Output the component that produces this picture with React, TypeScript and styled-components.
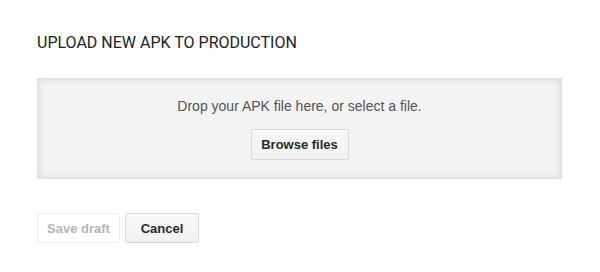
import React from 'react';
import styled, { createGlobalStyle } from 'styled-components';

const GlobalStyle = createGlobalStyle`
  html, body {
    margin: 0;
    padding: 0;
    background: #fff;
  }
  body {
    font-family: 'Liberation Sans', Arial, sans-serif;
  }
`;

const Page = styled.div`
  width: 600px;
  height: 272px;
  box-sizing: border-box;
  padding: 34px 38px 0 37px;
`;

const Heading = styled.h2`
  margin: 0;
  font-family: Roboto, 'Liberation Sans', sans-serif;
  font-weight: 400;
  font-size: 16px;
  line-height: 18px;
  color: #222;
`;

const DropZone = styled.div`
  margin-top: 26px;
  height: 101px;
  box-sizing: border-box;
  background: #f3f3f3;
  border: 1px solid #e0e0e0;
  box-shadow: inset 0 0 7px rgba(0, 0, 0, 0.13);
  display: flex;
  flex-direction: column;
  align-items: center;
  padding-top: 19px;
`;

const DropText = styled.p`
  margin: 0;
  font-size: 14px;
  line-height: 16px;
  color: #555;
`;

const Button = styled.button<{ $disabled?: boolean; $width: number }>`
  box-sizing: border-box;
  width: ${(p) => p.$width}px;
  height: 30px;
  padding: 0;
  white-space: nowrap;
  font-family: 'Liberation Sans', Arial, sans-serif;
  font-size: 13px;
  font-weight: 700;
  border-radius: 2px;
  border: 1px solid ${(p) => (p.$disabled ? '#eeeeee' : '#d9d9d9')};
  background: ${(p) =>
    p.$disabled ? '#fff' : 'linear-gradient(#f8f8f8, #f1f1f1)'};
  color: ${(p) => (p.$disabled ? '#b5b5b5' : '#2a2a2a')};
  cursor: ${(p) => (p.$disabled ? 'default' : 'pointer')};
`;

const BrowseButton = styled(Button)`
  margin-top: 15px;
  height: 31px;
`;

const Actions = styled.div`
  margin-top: 34px;
  display: flex;
  gap: 5px;
`;

const App = () => {
  return (
    <>
      <GlobalStyle />
      <Page>
        <Heading>UPLOAD NEW APK TO PRODUCTION</Heading>
        <DropZone>
          <DropText>Drop your APK file here, or select a file.</DropText>
          <BrowseButton $width={98}>Browse files</BrowseButton>
        </DropZone>
        <Actions>
          <Button $disabled $width={83}>
            Save draft
          </Button>
          <Button $width={74}>Cancel</Button>
        </Actions>
      </Page>
    </>
  );
};

export default App;
